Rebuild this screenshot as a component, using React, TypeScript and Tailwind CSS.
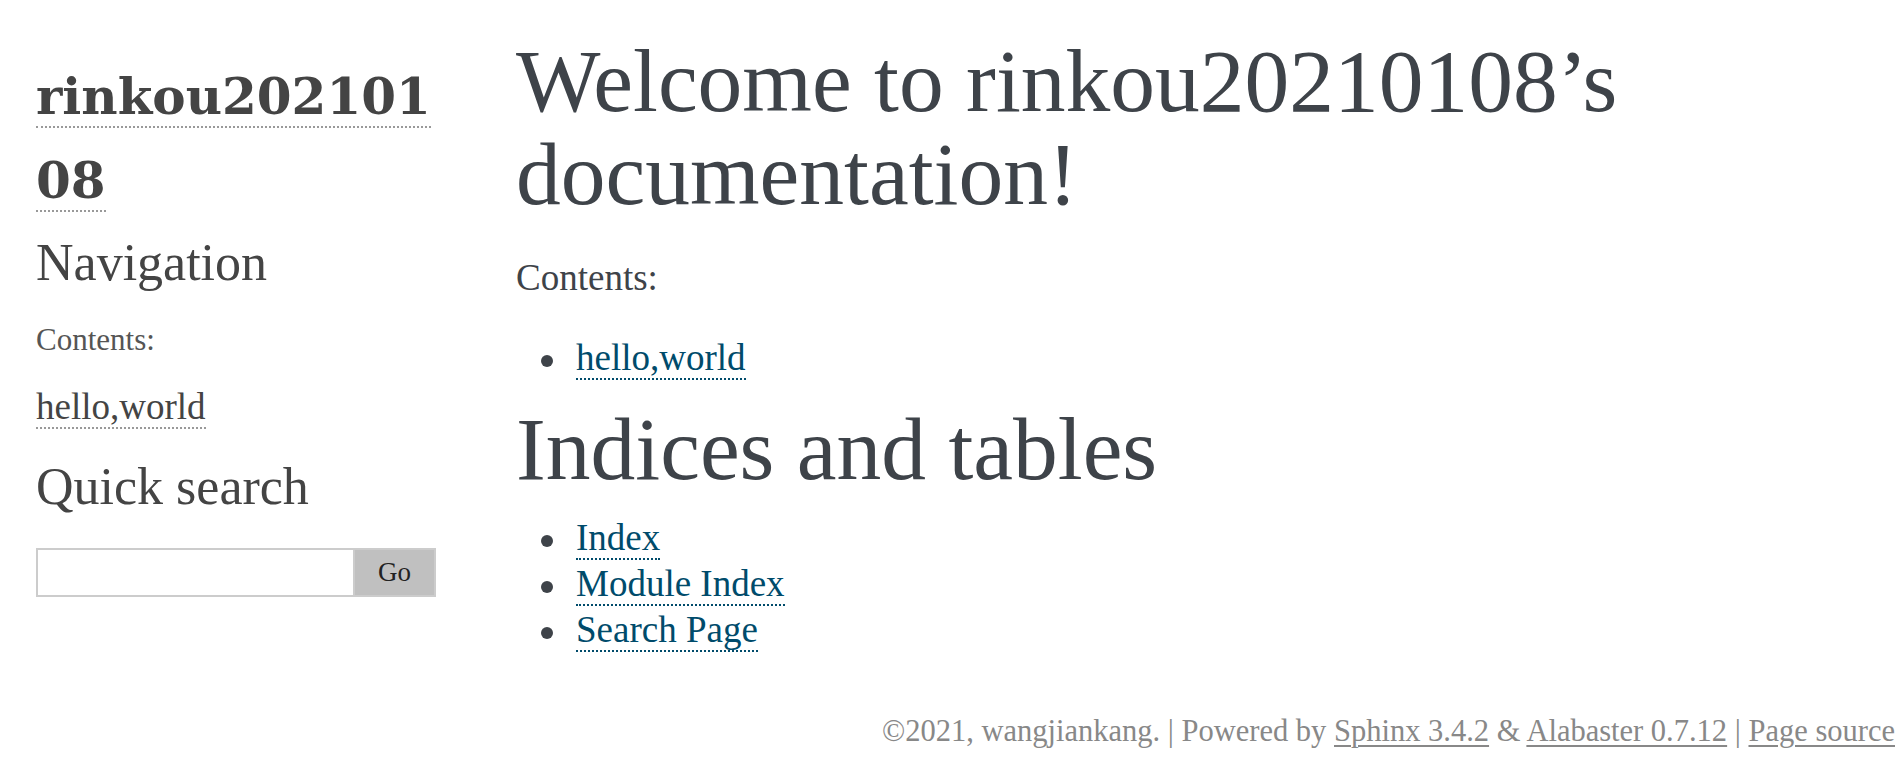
export default function App() {
  return (
    <div className="min-h-[770px] w-full bg-white font-['Liberation_Serif',serif] text-[#3e4349]">
      <div className="flex items-start">
        {/* Sidebar */}
        <aside className="ml-[36px] w-[400px] shrink-0 pt-[55px]">
          <h1 className="font-['DejaVu_Serif',serif] text-[50px] font-bold leading-[84px] text-[#444]">
            <a href="#" className="border-b-2 border-dotted border-[#999]">
              rinkou202101
              <br />
              08
            </a>
          </h1>
          <h3 className="mt-[9.5px] text-[52px] leading-[60px] text-[#444]">Navigation</h3>
          <p className="mt-[27.4px] text-[31px] leading-[40px] text-[#555]">Contents:</p>
          <ul className="mt-[24px]">
            <li className="text-[37px] leading-[46px] text-[#444]">
              <a href="#" className="border-b-2 border-dotted border-[#999]">
                hello,world
              </a>
            </li>
          </ul>
          <h3 className="mt-[27.6px] text-[52px] leading-[60px] text-[#444]">Quick search</h3>
          <form className="mt-[30.5px] flex h-[49px]">
            <input
              type="text"
              className="h-[49px] w-[319px] border-2 border-[#ccc] bg-white outline-none"
            />
            <button
              type="button"
              className="h-[49px] w-[81px] border-2 border-l-0 border-[#ccc] bg-[#c0c0c0] font-['Liberation_Serif',serif] text-[27px] text-[#222]"
            >
              Go
            </button>
          </form>
        </aside>

        {/* Body */}
        <main className="ml-[80px] w-[1320px] shrink-0 pt-[33.5px]">
          <h1 className="text-[89.5px] leading-[93px]">
            Welcome to rinkou20210108’s documentation!
          </h1>
          <p className="mt-[34px] text-[37px] leading-[48px]">Contents:</p>
          <ul className="mt-[33px] pl-[25px]">
            <ListLink label="hello,world" />
          </ul>
          <h1 className="mt-[21px] text-[89.5px] leading-[93px]">Indices and tables</h1>
          <ul className="mt-[20px] pl-[25px]">
            <ListLink label="Index" />
            <ListLink label="Module Index" />
            <ListLink label="Search Page" />
          </ul>
        </main>
      </div>

      <footer className="mt-[58px] pr-[7px] text-right text-[30.5px] leading-[40px] text-[#888]">
        ©2021, wangjiankang. | Powered by{" "}
        <a href="#" className="underline decoration-2 underline-offset-[4px]">
          Sphinx 3.4.2
        </a>{" "}
        &amp;{" "}
        <a href="#" className="underline decoration-2 underline-offset-[4px]">
          Alabaster 0.7.12
        </a>{" "}
        |{" "}
        <a href="#" className="underline decoration-2 underline-offset-[4px]">
          Page source
        </a>
      </footer>
    </div>
  );
}

function ListLink({ label }: { label: string }) {
  return (
    <li className="flex h-[46px] text-[37px] leading-[46px]">
      <span className="mt-[20.5px] mr-[23px] h-[12px] w-[12px] shrink-0 rounded-full bg-[#3e4349]" />
      <span>
        <a href="#" className="border-b-2 border-dotted border-[#004b6b] text-[#004b6b]">
          {label}
        </a>
      </span>
    </li>
  );
}
